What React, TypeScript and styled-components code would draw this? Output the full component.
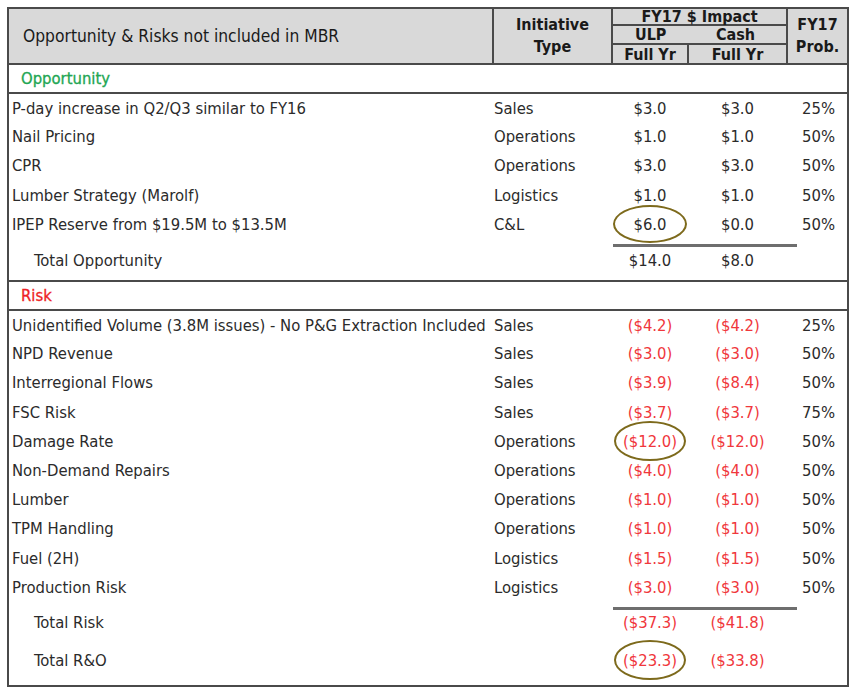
import React from "react";
import styled, { createGlobalStyle } from "styled-components";

const GlobalStyle = createGlobalStyle`
  html, body {
    margin: 0;
    padding: 0;
    background: #ffffff;
  }
  body {
    font-family: "DejaVu Sans Condensed", "DejaVu Sans", "Liberation Sans", sans-serif;
    color: #2b2b2b;
  }
`;

const Page = styled.div`
  padding: 7px;
`;

const Table = styled.table`
  width: 840px;
  table-layout: fixed;
  border-collapse: collapse;
  font-size: 16.5px;
  border: 2px solid #4a4a4a;
`;

const HeadCell = styled.th<{ $align?: "left" | "center"; $bold?: boolean; $h?: number }>`
  background: #d9d9d9;
  border: 2px solid #4a4a4a;
  padding: 0 4px;
  height: ${(p) => (p.$h ? `${p.$h}px` : "auto")};
  text-align: ${(p) => p.$align || "center"};
  font-weight: ${(p) => (p.$bold ? 700 : 400)};
  font-size: 16px;
  line-height: 15px;
  color: #1a1a1a;
  vertical-align: middle;
  white-space: nowrap;
`;

const HeadTitle = styled.span`
  padding-left: 10px;
  font-size: 17.3px;
`;

const StackLabel = styled.div`
  line-height: 22px;
`;

const SplitLabels = styled.div`
  display: flex;
  justify-content: space-between;
  padding: 0 27px 0 18px;
`;

const SectionCell = styled.td<{ $tone: "green" | "red" }>`
  height: 27px;
  padding: 0 0 0 12px;
  font-size: 16.5px;
  color: ${(p) => (p.$tone === "green" ? "#22a653" : "#ee1f26")};
  -webkit-text-stroke: 0.3px currentColor;
  border-bottom: 2px solid #4a4a4a;
  vertical-align: middle;
`;

const Row = styled.tr<{ $h: number }>`
  height: ${(p) => p.$h}px;
`;

const Cell = styled.td<{ $indent?: boolean }>`
  padding: 0 0 0 ${(p) => (p.$indent ? "25px" : "3px")};
  white-space: nowrap;
  overflow: visible;
  vertical-align: middle;
  color: #2b2b2b;
`;

const TypeCell = styled.td`
  padding: 0 0 0 1px;
  white-space: nowrap;
  vertical-align: middle;
  color: #2b2b2b;
`;

const ValueCell = styled.td<{ $neg?: boolean }>`
  text-align: center;
  white-space: nowrap;
  vertical-align: middle;
  color: ${(p) => (p.$neg ? "#f0373c" : "#2b2b2b")};
  padding: 0;
`;

const ProbCell = styled.td`
  text-align: right;
  padding: 0 12px 0 0;
  vertical-align: middle;
  color: #2b2b2b;
`;

const Circled = styled.span<{ $w: number; $h: number }>`
  position: relative;
  display: inline-block;
  &::after {
    content: "";
    position: absolute;
    left: 50%;
    top: 50%;
    width: ${(p) => p.$w}px;
    height: ${(p) => p.$h}px;
    transform: translate(-50%, -50%);
    border: 2px solid #7d6a1c;
    border-radius: 50%;
    box-sizing: border-box;
  }
`;

const RuleCell = styled.td`
  padding: 0;
  height: 8px;
  vertical-align: bottom;
`;

const Rule = styled.div`
  width: 184px;
  height: 3px;
  margin-left: 1px;
  background: #6e6e6e;
`;

const DividerRow = styled.tr<{ $h: number }>`
  height: ${(p) => p.$h}px;
  td {
    border-bottom: 2px solid #4a4a4a;
    padding-bottom: 5px;
  }
`;

type Line = {
  desc: string;
  type: string;
  ulp: string;
  cash: string;
  prob: string;
  circle?: [number, number];
};

const opportunities: Line[] = [
  { desc: "P-day increase in Q2/Q3 similar to FY16", type: "Sales", ulp: "$3.0", cash: "$3.0", prob: "25%" },
  { desc: "Nail Pricing", type: "Operations", ulp: "$1.0", cash: "$1.0", prob: "50%" },
  { desc: "CPR", type: "Operations", ulp: "$3.0", cash: "$3.0", prob: "50%" },
  { desc: "Lumber Strategy (Marolf)", type: "Logistics", ulp: "$1.0", cash: "$1.0", prob: "50%" },
  { desc: "IPEP Reserve from $19.5M to $13.5M", type: "C&L", ulp: "$6.0", cash: "$0.0", prob: "50%", circle: [74, 38] },
];

const risks: Line[] = [
  { desc: "Unidentified Volume (3.8M issues) - No P&G Extraction Included", type: "Sales", ulp: "($4.2)", cash: "($4.2)", prob: "25%" },
  { desc: "NPD Revenue", type: "Sales", ulp: "($3.0)", cash: "($3.0)", prob: "50%" },
  { desc: "Interregional Flows", type: "Sales", ulp: "($3.9)", cash: "($8.4)", prob: "50%" },
  { desc: "FSC Risk", type: "Sales", ulp: "($3.7)", cash: "($3.7)", prob: "75%" },
  { desc: "Damage Rate", type: "Operations", ulp: "($12.0)", cash: "($12.0)", prob: "50%", circle: [72, 40] },
  { desc: "Non-Demand Repairs", type: "Operations", ulp: "($4.0)", cash: "($4.0)", prob: "50%" },
  { desc: "Lumber", type: "Operations", ulp: "($1.0)", cash: "($1.0)", prob: "50%" },
  { desc: "TPM Handling", type: "Operations", ulp: "($1.0)", cash: "($1.0)", prob: "50%" },
  { desc: "Fuel (2H)", type: "Logistics", ulp: "($1.5)", cash: "($1.5)", prob: "50%" },
  { desc: "Production Risk", type: "Logistics", ulp: "($3.0)", cash: "($3.0)", prob: "50%" },
];

const Value: React.FC<{ text: string; circle?: [number, number] }> = ({ text, circle }) =>
  circle ? (
    <Circled $w={circle[0]} $h={circle[1]}>
      {text}
    </Circled>
  ) : (
    <>{text}</>
  );

const DataRow: React.FC<{ line: Line; neg?: boolean }> = ({ line, neg }) => (
  <Row $h={29.2}>
    <Cell>{line.desc}</Cell>
    <TypeCell>{line.type}</TypeCell>
    <ValueCell $neg={neg}>
      <Value text={line.ulp} circle={line.circle} />
    </ValueCell>
    <ValueCell $neg={neg}>{line.cash}</ValueCell>
    <ProbCell>{line.prob}</ProbCell>
  </Row>
);

const RuleRow: React.FC = () => (
  <tr>
    <RuleCell colSpan={2} />
    <RuleCell colSpan={3}>
      <Rule />
    </RuleCell>
  </tr>
);

const App: React.FC = () => (
  <Page>
    <GlobalStyle />
    <Table>
      <colgroup>
        <col style={{ width: 485 }} />
        <col style={{ width: 119 }} />
        <col style={{ width: 76 }} />
        <col style={{ width: 99 }} />
        <col style={{ width: 61 }} />
      </colgroup>
      <thead>
        <tr>
          <HeadCell rowSpan={3} $align="left">
            <HeadTitle>Opportunity &amp; Risks not included in MBR</HeadTitle>
          </HeadCell>
          <HeadCell rowSpan={3} $bold>
            <StackLabel>
              Initiative
              <br />
              Type
            </StackLabel>
          </HeadCell>
          <HeadCell colSpan={2} $bold $h={15}>
            FY17 $ Impact
          </HeadCell>
          <HeadCell rowSpan={3} $bold>
            <StackLabel>
              FY17
              <br />
              Prob.
            </StackLabel>
          </HeadCell>
        </tr>
        <tr>
          <HeadCell colSpan={2} $bold $h={17}>
            <SplitLabels>
              <span>ULP</span>
              <span>Cash</span>
            </SplitLabels>
          </HeadCell>
        </tr>
        <tr>
          <HeadCell $bold $h={18}>
            Full Yr
          </HeadCell>
          <HeadCell $bold $h={18}>
            Full Yr
          </HeadCell>
        </tr>
      </thead>
      <tbody>
        <tr>
          <SectionCell colSpan={5} $tone="green">
            Opportunity
          </SectionCell>
        </tr>
        {opportunities.map((l) => (
          <DataRow key={l.desc} line={l} />
        ))}
        <RuleRow />
        <DividerRow $h={34}>
          <Cell $indent>Total Opportunity</Cell>
          <TypeCell />
          <ValueCell>$14.0</ValueCell>
          <ValueCell>$8.0</ValueCell>
          <ProbCell />
        </DividerRow>
        <tr>
          <SectionCell colSpan={5} $tone="red">
            Risk
          </SectionCell>
        </tr>
        {risks.map((l) => (
          <DataRow key={l.desc} line={l} neg />
        ))}
        <RuleRow />
        <Row $h={26}>
          <Cell $indent>Total Risk</Cell>
          <TypeCell />
          <ValueCell $neg>($37.3)</ValueCell>
          <ValueCell $neg>($41.8)</ValueCell>
          <ProbCell />
        </Row>
        <Row $h={50}>
          <Cell $indent>Total R&amp;O</Cell>
          <TypeCell />
          <ValueCell $neg>
            <Value text="($23.3)" circle={[72, 40]} />
          </ValueCell>
          <ValueCell $neg>($33.8)</ValueCell>
          <ProbCell />
        </Row>
      </tbody>
    </Table>
  </Page>
);

export default App;
